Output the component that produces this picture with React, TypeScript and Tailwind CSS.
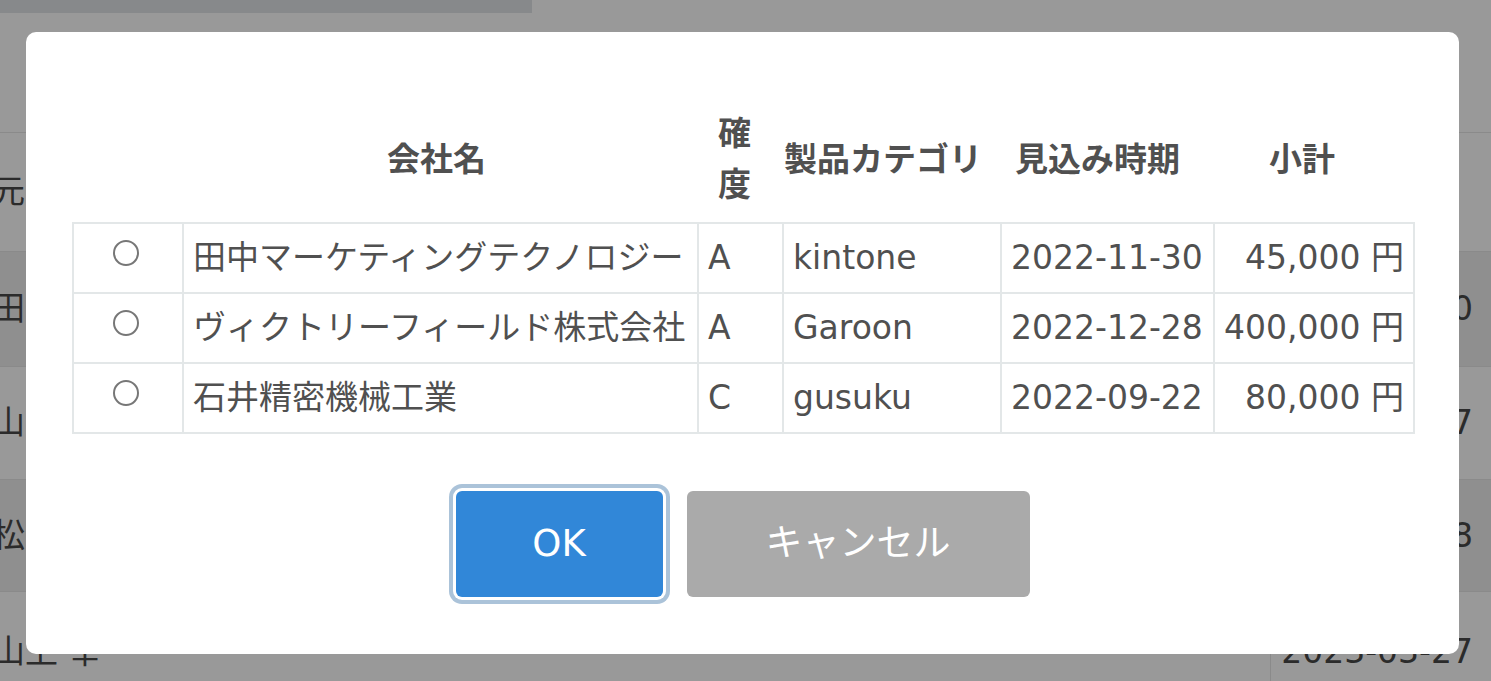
import React from "react";

const bgRows = [
  { h: "h-[119px]", bg: "bg-[#999999]", left: "元アイ", right: "" },
  { h: "h-[115px]", bg: "bg-[#8f8f8f]", left: "田中 一郎", right: "2023-01-10" },
  { h: "h-[113px]", bg: "bg-[#999999]", left: "山田 花子", right: "2023-02-17" },
  { h: "h-[112px]", bg: "bg-[#8f8f8f]", left: "松井 健", right: "2023-03-08" },
  { h: "h-[120px]", bg: "bg-[#999999]", left: "山上 幸", right: "2023-03-27" },
];

const rows = [
  { name: "田中マーケティングテクノロジー", rank: "A", cat: "kintone", date: "2022-11-30", sub: "45,000 円" },
  { name: "ヴィクトリーフィールド株式会社", rank: "A", cat: "Garoon", date: "2022-12-28", sub: "400,000 円" },
  { name: "石井精密機械工業", rank: "C", cat: "gusuku", date: "2022-09-22", sub: "80,000 円" },
];

export default function App() {
  return (
    <div className="relative h-[681px] w-[1491px] overflow-hidden bg-[#999999] font-['DejaVu_Sans','Noto_Sans_CJK_JP',sans-serif]">
      {/* background page */}
      <div className="h-[13px] w-[532px] bg-[#87898b]" />
      <div className="h-[119px]" />
      {bgRows.map((r, i) => (
        <div key={i} className={`flex border-t border-[#8a8a8a] ${r.h} ${r.bg}`}>
          <div className="-ml-[8px] flex flex-1 items-center text-[33px] text-[#2b2b2b]">{r.left}</div>
          <div className="flex w-[221px] items-center justify-end border-l border-[#8a8a8a] pr-[18px] text-[33px] text-[#2b2b2b]">
            {r.right}
          </div>
        </div>
      ))}

      {/* dialog */}
      <div className="absolute left-[26px] top-[32px] h-[622px] w-[1433px] rounded-[10px] bg-white px-[46px] pt-[76px]">
        <table className="w-full table-fixed border-collapse text-[33px] text-[#505050]">
          <colgroup>
            <col className="w-[110px]" />
            <col className="w-[515px]" />
            <col className="w-[85px]" />
            <col className="w-[218px]" />
            <col className="w-[213px]" />
            <col className="w-[200px]" />
          </colgroup>
          <thead>
            <tr className="font-bold leading-[51px] text-[#505050]">
              <th className="pb-[12px]" />
              <th className="pb-[12px] pr-[8px] text-center">会社名</th>
              <th className="pb-[12px] pr-[12px] text-center">
                確<br />度
              </th>
              <th className="pb-[12px] pr-[18px] text-center">製品カテゴリ</th>
              <th className="pb-[12px] pr-[20px] text-center">見込み時期</th>
              <th className="pb-[12px] pr-[24px] text-center">小計</th>
            </tr>
          </thead>
          <tbody>
            {rows.map((r, i) => (
              <tr key={i} className="leading-[68px]">
                <td className="border-2 border-[#e3e7e8] p-0 pr-[4px] text-center">
                  <span className="inline-block h-[26px] w-[26px] -translate-y-[7px] rounded-full border-2 border-[#777777] align-middle" />
                </td>
                <td className="whitespace-nowrap border-2 border-[#e3e7e8] px-[9px] py-0">{r.name}</td>
                <td className="border-2 border-[#e3e7e8] px-[9px] py-0">{r.rank}</td>
                <td className="border-2 border-[#e3e7e8] px-[9px] py-0">{r.cat}</td>
                <td className="whitespace-nowrap border-2 border-[#e3e7e8] px-[9px] py-0">{r.date}</td>
                <td className="whitespace-nowrap border-2 border-[#e3e7e8] px-[9px] py-0 text-right">{r.sub}</td>
              </tr>
            ))}
          </tbody>
        </table>

        <div className="mt-[57px] flex justify-center gap-[24px]">
          <button className="h-[106px] w-[207px] rounded-[6px] bg-[#3187d8] text-[37px] text-white shadow-[0_0_0_3px_#ffffff,0_0_0_7px_#abc3d9]">
            OK
          </button>
          <button className="h-[106px] w-[343px] rounded-[6px] bg-[#aaaaaa] text-[37px] text-white">
            キャンセル
          </button>
        </div>
      </div>
    </div>
  );
}
